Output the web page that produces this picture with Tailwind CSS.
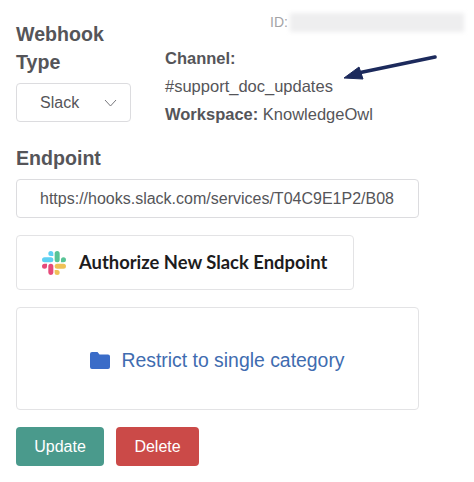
<!DOCTYPE html>
<html lang="en">
<head>
<meta charset="UTF-8">
<title>Webhook</title>
<script src="https://cdn.jsdelivr.net/npm/@tailwindcss/browser@4"></script>
</head>
<body class="bg-white font-['Liberation_Sans',Arial,sans-serif] text-[#555559]">
<div class="relative w-[474px] h-[482px] overflow-hidden pl-4 pt-[20px]">
  <!-- blurred id -->
  <div class="absolute left-[270px] top-[12px] flex items-center gap-[2px]">
    <span class="text-[14px] leading-[20px] text-[#a3a3a6]">ID:</span>
    <div class="w-[174px] h-[19px] bg-[#eeeeef] blur-[2px]"></div>
  </div>
  <!-- arrow annotation -->
  <svg class="absolute left-[340px] top-[50px]" width="100" height="34" viewBox="0 0 100 34">
    <path d="M95 7 L18 23" stroke="#1c2a5c" stroke-width="3.6" stroke-linecap="round" fill="none"/>
    <path d="M4 28 L19 17 L23 29 Z" fill="#1c2a5c" stroke="#1c2a5c" stroke-linejoin="round"/>
  </svg>

  <div class="flex">
    <div class="w-[149px]">
      <div class="w-[115px] text-[19.6px] leading-[28px] font-bold">Webhook Type</div>
      <div class="mt-[7px] w-[115px] h-[39px] border border-[#dcdcdf] rounded-[4px] flex items-center pl-[23px] pr-[13px] justify-between text-[16px]">
        <span>Slack</span>
        <svg width="13" height="8" viewBox="0 0 13 8" fill="none" stroke="#77777c" stroke-width="1"><path d="M1 1l5.5 6 5.5-6"/></svg>
      </div>
    </div>
    <div class="pt-[24px] text-[16.5px] leading-[28px]">
      <div class="font-bold">Channel:</div>
      <div>#support_doc_updates</div>
      <div><span class="font-bold">Workspace:</span> KnowledgeOwl</div>
    </div>
  </div>

  <div class="mt-[16px] text-[19.6px] leading-[28px] font-bold">Endpoint</div>
  <div class="mt-[7px] w-[403px] h-[39px] border border-[#dcdcdf] rounded-[4px] flex items-center pl-[23px] text-[16px] whitespace-nowrap overflow-hidden">https://hooks.slack.com/services/T04C9E1P2/B08</div>

  <div class="mt-[17px] w-[338px] h-[55px] border border-[#e3e3e5] rounded-[4px] flex items-center pl-[25px] gap-[13px]">
    <svg width="24" height="24" viewBox="0 0 122.8 122.8" opacity="0.8">
      <path d="M25.8 77.6a12.9 12.9 0 1 1-12.9-12.9h12.9zm6.5 0a12.9 12.9 0 0 1 25.8 0v32.3a12.9 12.9 0 1 1-25.8 0z" fill="#e01e5a"/>
      <path d="M45.2 25.8a12.9 12.9 0 1 1 12.9-12.9v12.9zm0 6.5a12.9 12.9 0 0 1 0 25.8H12.9a12.9 12.9 0 0 1 0-25.8z" fill="#36c5f0"/>
      <path d="M97 45.2a12.9 12.9 0 1 1 12.9 12.9H97zm-6.5 0a12.9 12.9 0 0 1-25.8 0V12.9a12.9 12.9 0 1 1 25.8 0z" fill="#2eb67d"/>
      <path d="M77.6 97a12.9 12.9 0 1 1-12.9 12.9V97zm0-6.5a12.9 12.9 0 0 1 0-25.8h32.3a12.9 12.9 0 0 1 0 25.8z" fill="#ecb22e"/>
    </svg>
    <span class="font-['Lato',sans-serif] font-bold text-[18.4px] text-[#1d1c1d] whitespace-nowrap">Authorize New Slack Endpoint</span>
  </div>

  <div class="mt-[17px] w-[403px] h-[103px] border border-[#e3e3e5] rounded-[4px] flex items-center justify-center gap-[11px] text-[19.4px] text-[#3f6cb0] pt-[4px]">
    <svg width="20" height="17" viewBox="0 0 20 17"><path d="M2 0h5.5l2 2.5H18a2 2 0 0 1 2 2V15a2 2 0 0 1-2 2H2a2 2 0 0 1-2-2V2a2 2 0 0 1 2-2z" fill="#3a6cc8"/></svg>
    <span>Restrict to single category</span>
  </div>

  <div class="mt-[17px] flex gap-[12px] text-[16px] text-white">
    <button class="w-[88px] h-[39px] bg-[#4a9a8c] rounded-[4px]">Update</button>
    <button class="w-[83px] h-[39px] bg-[#cb4a48] rounded-[4px]">Delete</button>
  </div>
</div>
</body>
</html>
